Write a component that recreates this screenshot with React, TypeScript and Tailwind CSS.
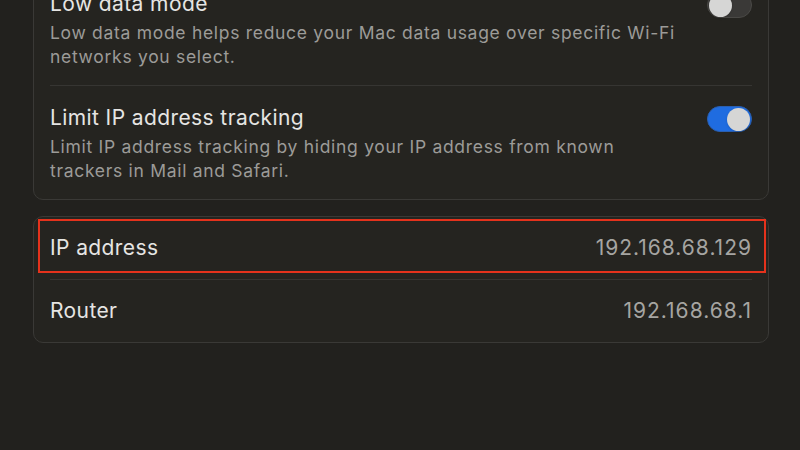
import React from "react";

// Toggle switch in the macOS style
function Toggle({ on }: { on: boolean }) {
  return (
    <div
      className={
        on
          ? "w-[45px] h-[26px] rounded-full bg-[#1f6ce0] border border-[#2a5fb0] flex items-center justify-end px-[1px] shrink-0"
          : "w-[45px] h-[26px] rounded-full bg-[#3a3937] border border-[#4a4946] flex items-center justify-start px-[1px] shrink-0"
      }
    >
      <div className="w-[23px] h-[23px] rounded-full bg-[#d6d6d5] shadow" />
    </div>
  );
}

function ToggleRow({ title, desc, on }: { title: string; desc: string; on: boolean }) {
  return (
    <div className="flex items-start justify-between gap-4 pt-[19px] pb-[16px]">
      <div className="flex flex-col">
        <span className="text-[21px] leading-[26px] tracking-[0.4px] text-[#e6e5e3]">{title}</span>
        <span className="text-[17.5px] leading-[24px] tracking-[0.7px] text-[#9c9b98] max-w-[640px] mt-[4px]">
          {desc}
        </span>
      </div>
      <div className="pt-[1px]">
        <Toggle on={on} />
      </div>
    </div>
  );
}

function InfoRow({ label, value }: { label: string; value: string }) {
  return (
    <div className="h-[62px] flex items-center justify-between">
      <span className="text-[21px] tracking-[0.4px] text-[#e6e5e3]">{label}</span>
      <span className="text-[21px] tracking-[1px] text-[#a6a5a2]">{value}</span>
    </div>
  );
}

export default function App() {
  return (
    <div
      className="w-[800px] h-[450px] overflow-hidden bg-[#22211e] pl-[33px] pr-[31px]"
      style={{ fontFamily: "Inter, 'Noto Sans', sans-serif" }}
    >
      {/* --- NETWORK OPTIONS --- */}
      <div className="-mt-[29px] rounded-[10px] border border-[#3a3936] bg-[#252420] px-[16px]">
        <ToggleRow
          title="Low data mode"
          desc="Low data mode helps reduce your Mac data usage over specific Wi-Fi networks you select."
          on={false}
        />
        <div className="h-px bg-[#363532]" />
        <ToggleRow
          title="Limit IP address tracking"
          desc="Limit IP address tracking by hiding your IP address from known trackers in Mail and Safari."
          on={true}
        />
      </div>

      {/* --- ADDRESSES --- */}
      <div className="relative mt-[16px] rounded-[10px] border border-[#3a3936] bg-[#252420] px-[16px]">
        <InfoRow label="IP address" value="192.168.68.129" />
        <div className="h-px bg-[#363532]" />
        <InfoRow label="Router" value="192.168.68.1" />
        <div className="absolute left-[4px] right-[2px] top-[2px] h-[54px] border-2 border-[#e5321c]" />
      </div>
    </div>
  );
}
